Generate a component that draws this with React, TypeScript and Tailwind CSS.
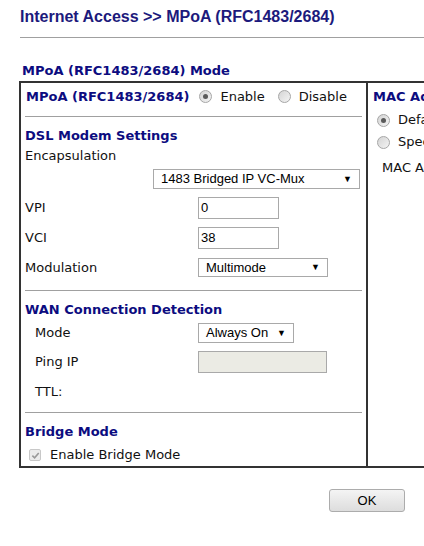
import React from 'react';

const verdana = "font-['DejaVu_Sans',Verdana,sans-serif]";
const arial = "font-['Liberation_Sans',Arial,sans-serif]";

function Radio({ checked }: { checked?: boolean }) {
  return (
    <span className="inline-flex h-[13px] w-[13px] shrink-0 items-center justify-center rounded-full border border-[#a6a6a6] bg-gradient-to-br from-[#d4d4d4] to-[#f4f4f4]">
      {checked && <span className="h-[5px] w-[5px] rounded-full bg-[#5a5a5a]" />}
    </span>
  );
}

function Select({ value, width }: { value: string; width: string }) {
  return (
    <div className={`flex h-full items-center justify-between border border-[#a9a9a9] bg-white pl-[7px] pr-[7px] text-[13px] text-black ${arial} ${width}`}>
      <span>{value}</span>
      <span className="text-[9px] leading-none">▼</span>
    </div>
  );
}

function Input({ value, width, disabled }: { value?: string; width: string; disabled?: boolean }) {
  return (
    <div className={`flex h-full items-center border border-[#a9a9a9] pl-[2px] text-[13px] text-black ${arial} ${width} ${disabled ? 'bg-[#ebebe4]' : 'bg-white'}`}>
      {value}
    </div>
  );
}

function Hr() {
  return <div className="h-px w-full bg-[#a0a0a0]" />;
}

export default function App() {
  return (
    <div className={`relative h-[546px] w-[424px] overflow-hidden bg-white ${verdana}`}>
      <div className={`flex h-[20px] items-center pl-[20px] pt-[1px] mt-[6px] text-[16px] font-bold text-[#1c1a7c] ${arial}`}>
        Internet Access &gt;&gt; MPoA (RFC1483/2684)
      </div>
      <div className="ml-[20px] mt-[11px] h-px w-[420px] bg-[#a0a0a0]" />

      <div className="mt-[22px] flex h-[21px] items-center pl-[22px] text-[13px] font-bold text-[#0c0c80]">
        MPoA (RFC1483/2684) Mode
      </div>

      <div className="ml-[19px] flex w-[600px] border-2 border-[#333]">
        {/* left cell */}
        <div className="flex w-[347px] shrink-0 flex-col border-r-2 border-[#333] px-[4px] pb-[1px] text-[13px] text-[#111]">
          <div className="flex h-[27px] items-center pl-[1px]">
            <span className="font-bold text-[#0c0c80]">MPoA (RFC1483/2684)</span>
            <span className="ml-[10px] flex items-center gap-[8px]">
              <Radio checked />
              <span>Enable</span>
            </span>
            <span className="ml-[13px] flex items-center gap-[8px]">
              <Radio />
              <span>Disable</span>
            </span>
          </div>
          <div className="mt-[6px]">
            <Hr />
          </div>

          <div className="mt-[9px] flex h-[20px] items-center font-bold text-[#0c0c80]">DSL Modem Settings</div>
          <div className="flex h-[19px] items-center">Encapsulation</div>
          <div className="mt-[4px] flex h-[20px] pl-[128px]">
            <Select value="1483 Bridged IP VC-Mux" width="w-[207px]" />
          </div>
          <div className="mt-[8px] flex h-[22px] items-center">
            <span className="w-[173px]">VPI</span>
            <Input value="0" width="w-[81px]" />
          </div>
          <div className="mt-[8px] flex h-[22px] items-center">
            <span className="w-[173px]">VCI</span>
            <Input value="38" width="w-[81px]" />
          </div>
          <div className="mt-[9px] flex h-[19px] items-center">
            <span className="w-[173px]">Modulation</span>
            <Select value="Multimode" width="w-[130px]" />
          </div>
          <div className="mt-[13px]">
            <Hr />
          </div>

          <div className="mt-[9px] flex h-[20px] items-center font-bold text-[#0c0c80]">WAN Connection Detection</div>
          <div className="mt-[3px] flex h-[20px] items-center">
            <span className="w-[173px] pl-[10px]">Mode</span>
            <Select value="Always On" width="w-[96px]" />
          </div>
          <div className="mt-[8px] flex h-[22px] items-center">
            <span className="w-[173px] pl-[10px]">Ping IP</span>
            <Input width="w-[129px]" disabled />
          </div>
          <div className="mt-[9px] flex h-[20px] items-center pl-[10px]">TTL:</div>
          <div className="mt-[10px]">
            <Hr />
          </div>

          <div className="mt-[9px] flex h-[20px] items-center font-bold text-[#0c0c80]">Bridge Mode</div>
          <div className="mt-[3px] flex h-[20px] items-center pl-[4px]">
            <span className="flex h-[12px] w-[12px] items-center justify-center rounded-[2px] border border-[#c8c8c8] bg-[#ececec]">
              <svg viewBox="0 0 10 10" className="h-[9px] w-[9px]">
                <path d="M1.5 5.2 L4 7.6 L8.6 2.2" fill="none" stroke="#9a9a9a" strokeWidth="1.8" />
              </svg>
            </span>
            <span className="ml-[9px]">Enable Bridge Mode</span>
          </div>
        </div>

        {/* right cell */}
        <div className="flex flex-1 flex-col pl-[5px] text-[13px] text-[#111]">
          <div className="flex h-[27px] items-center font-bold text-[#0c0c80] whitespace-nowrap">MAC Address Clone</div>
          <div className="flex h-[20px] items-center gap-[8px] pl-[4px] whitespace-nowrap">
            <Radio checked />
            <span>Default MAC Address</span>
          </div>
          <div className="mt-[2px] flex h-[20px] items-center gap-[8px] pl-[4px] whitespace-nowrap">
            <Radio />
            <span>Specify a MAC Address</span>
          </div>
          <div className="mt-[6px] flex h-[20px] items-center pl-[9px] whitespace-nowrap">MAC Address :</div>
        </div>
      </div>

      <div className="mt-[21px] flex pl-[329px]">
        <button
          className={`flex h-[23px] w-[76px] items-center justify-center rounded-[3px] border border-[#acacac] bg-gradient-to-b from-[#f4f4f4] to-[#dddddd] text-[13px] text-black ${arial}`}
        >
          OK
        </button>
      </div>
    </div>
  );
}
